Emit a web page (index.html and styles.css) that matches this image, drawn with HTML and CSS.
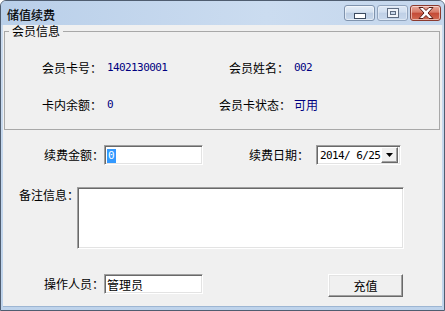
FILE: index.html
```html
<!DOCTYPE html>
<html>
<head>
  <meta charset="utf-8">
  <title>储值续费</title>
  <link rel="stylesheet" href="styles.css">
</head>
<body>
  <div class="window">
    <div class="titlebar">
      <span class="title">储值续费</span>
      <div class="caption-buttons">
        <span class="cap-btn cap-min">
          <svg width="12" height="6" viewBox="0 0 12 6"><rect x="0.5" y="0.5" width="11" height="5" fill="#fff" stroke="#3c4a5e"/></svg>
        </span>
        <span class="cap-btn cap-max">
          <svg width="12" height="10" viewBox="0 0 12 10"><rect x="0.5" y="0.5" width="11" height="9" fill="#fff" stroke="#3c4a5e"/><rect x="3.5" y="3.5" width="5" height="3" fill="#c9d7e8" stroke="#3c4a5e"/></svg>
        </span>
        <span class="cap-btn cap-close">
          <svg width="16" height="12" viewBox="0 0 16 12"><polygon points="1,0.5 5,0.5 8,3.5 11,0.5 15,0.5 10,6 15,11.5 11,11.5 8,8.5 5,11.5 1,11.5 6,6" fill="#fff" stroke="#5a1e16" stroke-width="1"/></svg>
        </span>
      </div>
    </div>

    <div class="client">
      <fieldset class="info">
        <legend>会员信息</legend>
        <div class="info-grid">
          <span class="lbl">会员卡号：</span>
          <span class="val num">1402130001</span>
          <span class="lbl lbl-right">会员姓名：</span>
          <span class="val num">002</span>

          <span class="lbl">卡内余额：</span>
          <span class="val num">0</span>
          <span class="lbl lbl-right">会员卡状态：</span>
          <span class="val">可用</span>
        </div>
      </fieldset>

      <div class="form-row row-amount">
        <span class="field-label">续费金额：</span>
        <div class="textbox"><span class="selected">0</span></div>
        <span class="field-label date-label">续费日期：</span>
        <div class="datepicker">
          <span class="date-text">2014/ 6/25</span>
          <span class="drop-btn">
            <svg width="7" height="4" viewBox="0 0 7 4"><polygon points="0,0 7,0 3.5,4" fill="#000"/></svg>
          </span>
        </div>
      </div>

      <div class="form-row row-remark">
        <span class="field-label remark-label">备注信息：</span>
        <div class="textarea"></div>
      </div>

      <div class="form-row row-operator">
        <span class="field-label">操作人员：</span>
        <div class="textbox"><span class="cn-text">管理员</span></div>
        <button class="push-btn" type="button">充值</button>
      </div>
    </div>
  </div>
</body>
</html>
```

FILE: styles.css
```css
* {
  box-sizing: border-box;
}
body {
  margin: 0;
  background: #fff;
  font-family: "Noto Sans CJK SC", "DejaVu Sans", sans-serif;
  font-size: 12px;
  color: #000;
}
.window {
  width: 445px;
  height: 311px;
  border: 1px solid #4f5d70;
  border-radius: 6px 6px 0 0;
  background: linear-gradient(to bottom, #bcd1ea 0px, #c9daee 24px, #bed3eb 100%);
  display: flex;
  flex-direction: column;
  overflow: hidden;
}
.titlebar {
  height: 24px;
  display: flex;
  align-items: flex-start;
  background: linear-gradient(to right, #b9cfe9, #cbdcf0 60%, #c4d6ec);
}
.title {
  margin: 6px 0 0 6px;
  line-height: 15px;
  font-size: 12px;
  color: #000;
  -webkit-text-stroke: 0.2px #000;
}
.caption-buttons {
  margin-left: auto;
  margin-right: 3px;
  margin-top: 4px;
  display: flex;
  gap: 2px;
}
.cap-btn {
  width: 31px;
  height: 16px;
  display: flex;
  align-items: center;
  justify-content: center;
  border: 1px solid #7f93ad;
  border-radius: 3px;
  background: linear-gradient(to bottom, #e6eef8, #d3e0ef 45%, #bccde3 50%, #c9d9ec);
  box-shadow: inset 0 0 0 1px rgba(255, 255, 255, 0.5);
}
.cap-min svg {
  margin-top: 5px;
}
.cap-max {
  opacity: 0.75;
}
.cap-close {
  border-color: #8c3a2e;
  background: linear-gradient(to bottom, #e9a99b, #d77a67 45%, #c44a36 50%, #d16a52);
}
.client {
  flex: 1;
  margin: 0 2px 3px 2px;
  background: #f0f0f0;
  border-bottom: 1px solid #9db6d3;
  display: flex;
  flex-direction: column;
}
.info {
  margin: 0 2px 0 1px;
  padding: 0 4px 15px;
  border: 1px solid #a8a8a8;
  min-width: 0;
}
.info legend {
  padding: 0 3px;
  line-height: 12px;
  font-size: 12px;
}
.info-grid {
  display: grid;
  grid-template-columns: 65px 112px 75px auto;
  grid-auto-rows: 20px;
  row-gap: 17px;
  align-items: center;
  margin-top: 20px;
  padding-left: 33px;
}
.lbl {
  white-space: nowrap;
}
.lbl-right {
  text-align: right;
  padding-right: 5px;
}
.val {
  color: #000080;
}
.num {
  font-family: "DejaVu Sans Mono", "Liberation Mono", monospace;
  font-size: 11px;
  letter-spacing: -0.6px;
}
.form-row {
  display: flex;
  align-items: center;
}
.row-amount {
  margin-top: 15px;
  padding-left: 41px;
}
.field-label {
  width: 60px;
  white-space: nowrap;
  line-height: 14px;
}
.date-label {
  margin-left: 46px;
  margin-right: 7px;
}
.textbox,
.textarea,
.datepicker {
  background: #fff;
  border: 1px solid;
  border-color: #a0a0a0 #fff #fff #a0a0a0;
  box-shadow: inset 1px 1px #696969, inset -1px -1px #e3e3e3;
}
.textbox {
  width: 99px;
  height: 20px;
  padding: 2px 0 0 2px;
  display: flex;
  align-items: center;
}
.selected {
  background: #3399ff;
  color: #fff;
  font-family: "DejaVu Sans Mono", "Liberation Mono", monospace;
  font-size: 11px;
  line-height: 14px;
  padding: 0 1px;
}
.cn-text {
  line-height: 14px;
}
.datepicker {
  width: 85px;
  height: 20px;
  display: flex;
  align-items: center;
  padding: 2px 2px 2px 3px;
}
.date-text {
  flex: 1;
  font-family: "DejaVu Sans Mono", "Liberation Mono", monospace;
  font-size: 11px;
  letter-spacing: -0.6px;
  white-space: pre;
}
.drop-btn {
  width: 17px;
  height: 16px;
  display: flex;
  align-items: center;
  justify-content: center;
  background: #f0f0f0;
  border: 1px solid;
  border-color: #fff #696969 #696969 #fff;
  box-shadow: inset -1px -1px #a0a0a0;
}
.row-remark {
  margin-top: 22px;
  padding-left: 16px;
  align-items: flex-start;
}
.remark-label {
  width: 58px;
  margin-top: 1px;
}
.textarea {
  width: 327px;
  height: 62px;
}
.row-operator {
  margin-top: 25px;
  padding-left: 41px;
  align-items: flex-start;
}
.row-operator .field-label {
  margin-top: 3px;
}
.push-btn {
  margin-left: 125px;
  width: 75px;
  height: 23px;
  padding: 0;
  font-family: "Noto Sans CJK SC", sans-serif;
  font-size: 12px;
  color: #000;
  background: #f0f0f0;
  border: 1px solid;
  border-color: #fff #696969 #696969 #fff;
  box-shadow: inset -1px -1px #a0a0a0, inset 1px 1px #e3e3e3;
}
```
